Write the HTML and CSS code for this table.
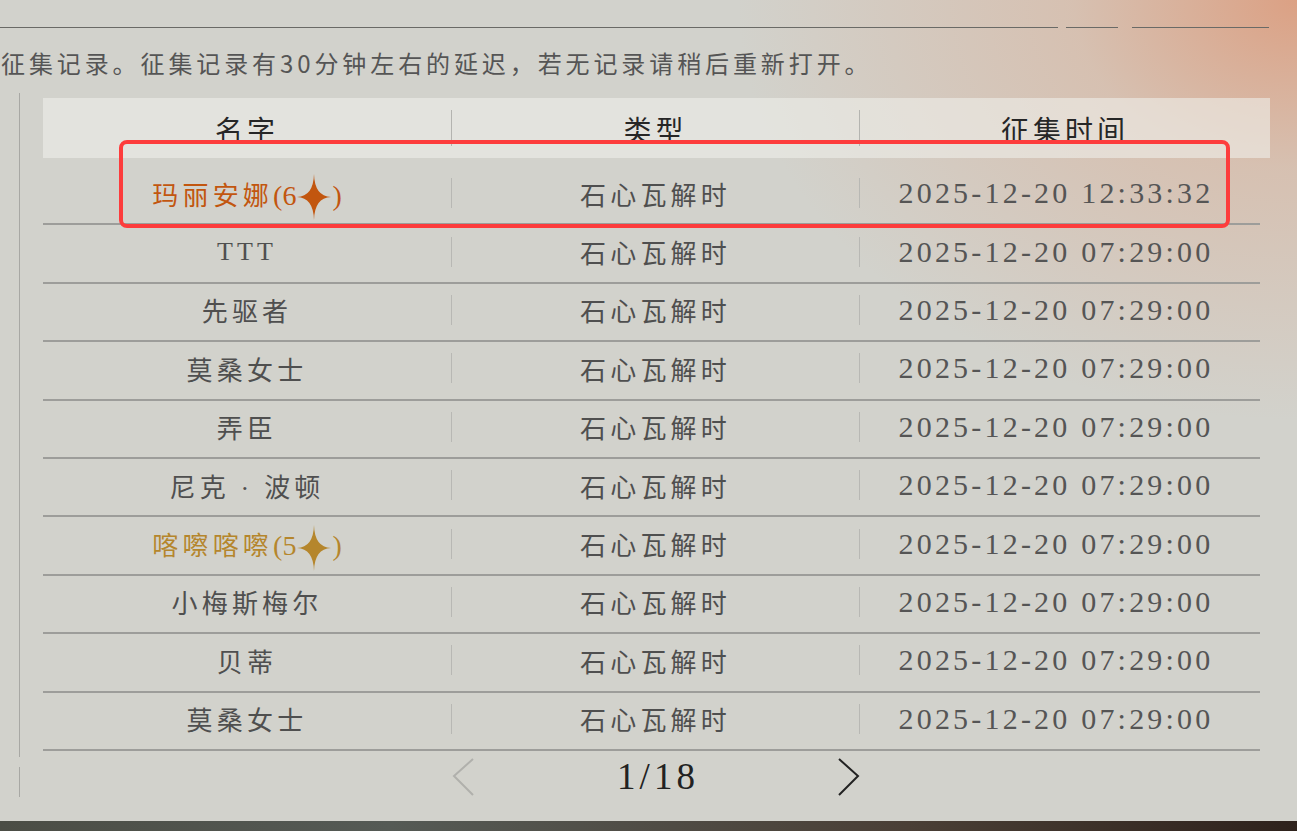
FILE: index.html
```html
<!DOCTYPE html>
<html lang="zh-CN">
<head>
    <meta charset="UTF-8">
    <meta name="viewport" content="width=device-width, initial-scale=1.0">
    <title>征集记录</title>
    <link rel="stylesheet" href="styles.css">
</head>
<body>

    <div class="tabs">
        <span class="tab-line long"></span>
        <span class="tab-line short"></span>
        <span class="tab-line mid"></span>
    </div>

    <p class="notice">征集记录。征集记录有30分钟左右的延迟，若无记录请稍后重新打开。</p>

    <div class="panel">
        <div class="thead">
            <div class="cell">名字</div><i class="sep"></i>
            <div class="cell">类型</div><i class="sep"></i>
            <div class="cell">征集时间</div>
        </div>

        <div class="tbody">
            <div class="row">
                <div class="cell name rare6">玛丽安娜<span class="tight">(6<svg class="star" viewBox="0 0 34 46"><path d="M17 0Q17.6 22.4 34 23Q17.6 23.6 17 46Q16.4 23.6 0 23Q16.4 22.4 17 0Z"/></svg>)</span></div><i class="sep"></i>
                <div class="cell type">石心瓦解时</div><i class="sep"></i>
                <div class="cell time">2025-12-20 12:33:32</div>
            </div>
            <div class="row">
                <div class="cell name">TTT</div><i class="sep"></i>
                <div class="cell type">石心瓦解时</div><i class="sep"></i>
                <div class="cell time">2025-12-20 07:29:00</div>
            </div>
            <div class="row">
                <div class="cell name">先驱者</div><i class="sep"></i>
                <div class="cell type">石心瓦解时</div><i class="sep"></i>
                <div class="cell time">2025-12-20 07:29:00</div>
            </div>
            <div class="row">
                <div class="cell name">莫桑女士</div><i class="sep"></i>
                <div class="cell type">石心瓦解时</div><i class="sep"></i>
                <div class="cell time">2025-12-20 07:29:00</div>
            </div>
            <div class="row">
                <div class="cell name">弄臣</div><i class="sep"></i>
                <div class="cell type">石心瓦解时</div><i class="sep"></i>
                <div class="cell time">2025-12-20 07:29:00</div>
            </div>
            <div class="row">
                <div class="cell name">尼克 · 波顿</div><i class="sep"></i>
                <div class="cell type">石心瓦解时</div><i class="sep"></i>
                <div class="cell time">2025-12-20 07:29:00</div>
            </div>
            <div class="row">
                <div class="cell name rare5">喀嚓喀嚓<span class="tight">(5<svg class="star" viewBox="0 0 34 46"><path d="M17 0Q17.6 22.4 34 23Q17.6 23.6 17 46Q16.4 23.6 0 23Q16.4 22.4 17 0Z"/></svg>)</span></div><i class="sep"></i>
                <div class="cell type">石心瓦解时</div><i class="sep"></i>
                <div class="cell time">2025-12-20 07:29:00</div>
            </div>
            <div class="row">
                <div class="cell name">小梅斯梅尔</div><i class="sep"></i>
                <div class="cell type">石心瓦解时</div><i class="sep"></i>
                <div class="cell time">2025-12-20 07:29:00</div>
            </div>
            <div class="row">
                <div class="cell name">贝蒂</div><i class="sep"></i>
                <div class="cell type">石心瓦解时</div><i class="sep"></i>
                <div class="cell time">2025-12-20 07:29:00</div>
            </div>
            <div class="row">
                <div class="cell name">莫桑女士</div><i class="sep"></i>
                <div class="cell type">石心瓦解时</div><i class="sep"></i>
                <div class="cell time">2025-12-20 07:29:00</div>
            </div>
        </div>
    </div>

    <div class="pager">
        <span class="rail"></span>
        <div class="pager-nav">
            <svg class="chevron disabled" viewBox="0 0 22 38"><polyline points="21,1 2,18 21,37"/></svg>
            <span class="page-num">1/18</span>
            <svg class="chevron" viewBox="0 0 22 38"><polyline points="1,1 20,18 1,37"/></svg>
        </div>
    </div>

    <div class="highlight"></div>
    <div class="bottom-strip"></div>

</body>
</html>
```

FILE: styles.css
```css
body {
    margin: 0;
    height: 100vh;
    overflow: hidden;
    position: relative;
    display: flex;
    flex-direction: column;
    font-family: "Liberation Serif", "Noto Sans CJK SC", serif;
    background:
        radial-gradient(ellipse 560px 420px at 100% 0%, rgba(220, 158, 128, 0.95) 0%, rgba(218, 178, 155, 0.55) 40%, rgba(210, 210, 204, 0) 100%),
        #d2d2cc;
}

.tabs {
    display: flex;
    margin-top: 27px;
    height: 1px;
}
.tab-line {
    height: 1px;
    background-color: #6a6a66;
}
.long {
    width: 1058px;
}
.short {
    width: 52px;
    margin-left: 8px;
}
.mid {
    width: 137px;
    margin-left: 14px;
}

.notice {
    margin: 17px 0 0 1px;
    font-family: "Noto Sans CJK SC", sans-serif;
    font-size: 24px;
    letter-spacing: 3.9px;
    line-height: 36px;
    color: #555;
}

.panel {
    margin: 12px 0 0 19px;
    width: 1227px;
    border-left: 1px solid #a8a8a4;
    padding: 5px 0 6px 23px;
}

.thead {
    display: grid;
    grid-template-columns: 408px 1px 407px 1px 410px;
    align-items: center;
    height: 60px;
    background-color: rgba(238, 238, 234, 0.6);
    font-size: 28px;
    letter-spacing: 4px;
    color: #262626;
}
.thead .cell {
    padding-top: 1px;
}
.thead .sep {
    height: 36px;
    background-color: #b4b4b0;
}

.tbody {
    margin-top: 9px;
    width: 1217px;
}
.row {
    display: grid;
    grid-template-columns: 408px 1px 407px 1px 400px;
    align-items: center;
    height: 58.4px;
    box-sizing: border-box;
    border-bottom: 2px solid #9d9d9a;
    padding-bottom: 4px;
}
.row .sep {
    height: 30px;
    background-color: #b8b8b4;
}

.cell {
    text-align: center;
    white-space: nowrap;
}
.name, .type {
    font-size: 26px;
    letter-spacing: 4.2px;
    color: #4f4f4f;
}
.time {
    font-size: 30px;
    letter-spacing: 3.2px;
    color: #555;
    padding-right: 8px;
}
.rare6 {
    color: #c2560f;
}
.rare5 {
    color: #b5862c;
}
.tight {
    font-size: 28px;
    letter-spacing: 0;
}
.star {
    width: 34px;
    height: 46px;
    vertical-align: middle;
    margin: -14px 1px -12px 1px;
    fill: currentColor;
}

.pager {
    display: flex;
    height: 40px;
    margin-left: 19px;
}
.rail {
    width: 1px;
    height: 30px;
    align-self: flex-end;
    background-color: #a8a8a4;
}
.pager-nav {
    margin-left: 432px;
    width: 408px;
    display: flex;
    justify-content: space-between;
    align-items: center;
}
.chevron {
    width: 22px;
    height: 38px;
    fill: none;
    stroke: #222;
    stroke-width: 2;
}
.chevron.disabled {
    stroke: #b0b0ac;
}
.page-num {
    font-size: 37px;
    letter-spacing: 4px;
    color: #222;
    padding-left: 4px;
}

.highlight {
    position: absolute;
    left: 119px;
    top: 140px;
    width: 1111px;
    height: 88px;
    box-sizing: border-box;
    border: 4px solid #fd3c3c;
    border-radius: 8px;
}

.bottom-strip {
    margin-top: auto;
    height: 10px;
    background: linear-gradient(90deg, #4b4d45, #555a55 30%, #4a3f36 70%, #2e221c);
}
```
